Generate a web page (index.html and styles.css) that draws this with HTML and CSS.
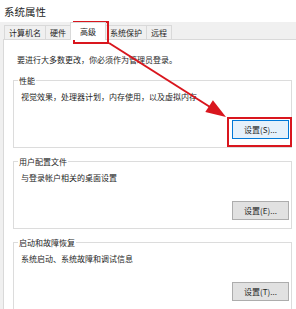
FILE: index.html
```html
<!DOCTYPE html>
<html lang="zh-CN">
<head>
    <meta charset="UTF-8">
    <title>系统属性</title>
    <link rel="stylesheet" href="styles.css">
</head>
<body>
    <div class="window">
        <div class="titlebar">系统属性</div>
        <div class="tabs">
            <div class="tab">计算机名</div>
            <div class="tab">硬件</div>
            <div class="tab tab-active">高级</div>
            <div class="tab">系统保护</div>
            <div class="tab">远程</div>
        </div>
        <div class="page">
            <p class="intro">要进行大多数更改，你必须作为管理员登录。</p>
            <div class="group">
                <span class="group-label">性能</span>
                <p class="group-desc">视觉效果，处理器计划，内存使用，以及虚拟内存</p>
                <div class="group-actions"><button class="btn btn-focus">设置(S)...</button></div>
            </div>
            <div class="group">
                <span class="group-label">用户配置文件</span>
                <p class="group-desc">与登录帐户相关的桌面设置</p>
                <div class="group-actions"><button class="btn">设置(E)...</button></div>
            </div>
            <div class="group">
                <span class="group-label">启动和故障恢复</span>
                <p class="group-desc">系统启动、系统故障和调试信息</p>
                <div class="group-actions"><button class="btn">设置(T)...</button></div>
            </div>
        </div>
        <!-- red annotation marks drawn over the dialog -->
        <svg class="marks" width="296" height="309" viewBox="0 0 296 309">
            <rect x="74" y="22" width="34" height="21" fill="none" stroke="#d9161e" stroke-width="2"/>
            <rect x="228" y="118" width="63" height="28" fill="none" stroke="#d9161e" stroke-width="2"/>
            <line x1="109" y1="43" x2="210" y2="107" stroke="#d9161e" stroke-width="2"/>
            <polygon points="226,117 205.3,112.1 212.9,100.3" fill="#d9161e"/>
        </svg>
    </div>
</body>
</html>
```

FILE: styles.css
```css
body{
    margin: 0;
    font-family: "Noto Sans CJK SC", "Noto Sans", sans-serif;
    color: #1e1e1e;
    overflow: hidden;
}
.window{
    position: relative;
    width: 296px;
    height: 309px;
    background-color: #f0f0f0;
    display: flex;
    flex-direction: column;
    overflow: hidden;
}
.titlebar{
    height: 22px;
    line-height: 24px;
    padding-left: 4px;
    font-size: 10.5px;
    background-color: #fff;
}
.tabs{
    height: 20px;
    display: flex;
    align-items: flex-end;
    padding-left: 4px;
}
.tab{
    box-sizing: border-box;
    height: 14px;
    line-height: 13px;
    padding: 0 4px;
    margin-left: -1px;
    border: 1px solid #d9d9d9;
    border-bottom: none;
    font-size: 8px;
}
.tab:first-child{
    margin-left: 0;
}
.tab-active{
    position: relative;
    z-index: 1;
    height: 18px;
    line-height: 17px;
    padding: 0 9px;
    margin-bottom: -1px;
    background-color: #fff;
}
.page{
    flex: 1;
    margin-left: 3px;
    margin-right: -10px;
    border: 1px solid #d9d9d9;
    background-color: #fff;
    font-size: 8px;
}
.intro{
    margin: 14px 0 0 13px;
    line-height: 12px;
}
.group{
    box-sizing: border-box;
    width: 279px;
    height: 68px;
    margin: 14px 0 0 9px;
    padding: 0 2px 0 4px;
    border: 1px solid #dcdcdc;
    display: flex;
    flex-direction: column;
}
.group + .group{
    margin-top: 13px;
}
.group-label{
    align-self: flex-start;
    margin-top: -6px;
    padding: 0 1px;
    line-height: 11px;
    background-color: #fff;
}
.group-desc{
    margin: 5px 0 0 3px;
    line-height: 11px;
}
.group-actions{
    margin-top: 18px;
    display: flex;
    justify-content: flex-end;
}
.btn{
    box-sizing: border-box;
    width: 57px;
    height: 19px;
    padding: 0;
    border: 1px solid #adadad;
    background-color: #e1e1e1;
    font-family: inherit;
    font-size: 8px;
    color: #1e1e1e;
}
.btn-focus{
    background-color: #e5f1fb;
    border-color: #0078d7;
}
.marks{
    position: absolute;
    left: 0;
    top: 0;
    pointer-events: none;
}
```
